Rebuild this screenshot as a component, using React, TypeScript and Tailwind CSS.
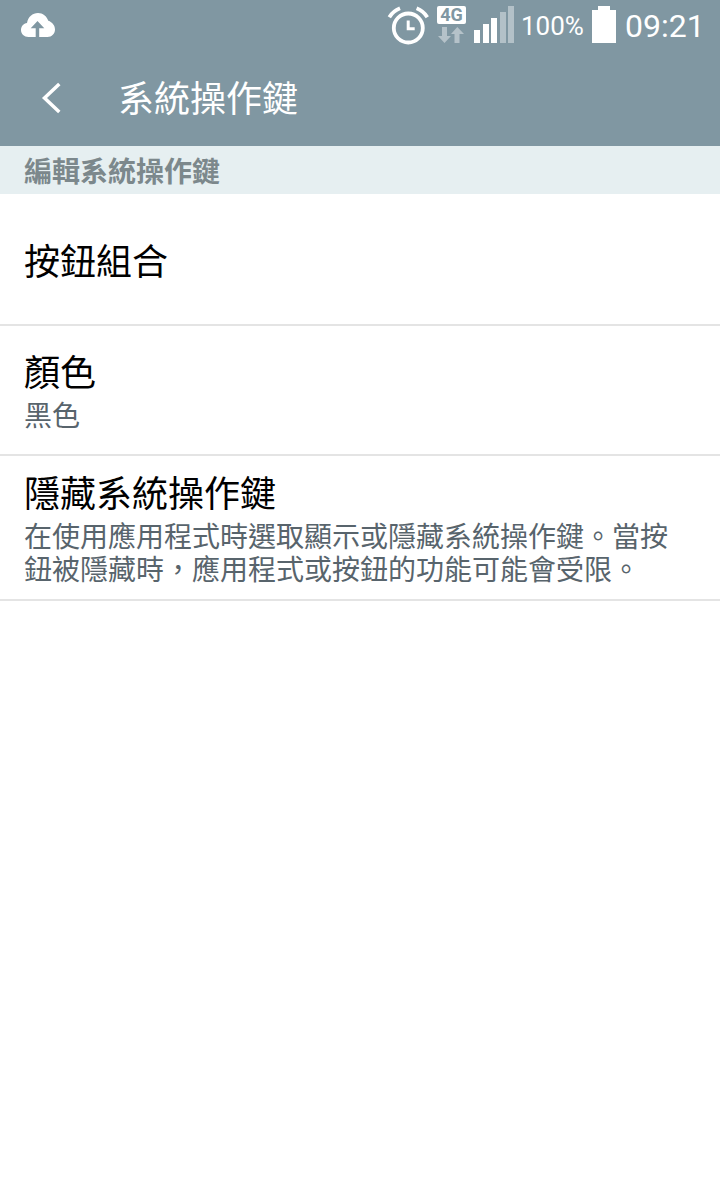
type SettingRowProps = {
  title: string;
  summary?: string;
  className: string;
};

function CloudUploadIcon() {
  return (
    <svg className="h-[50px] w-9" viewBox="20 0 36 50">
      <path
        fill="#fff"
        d="M28.500 37C24.200 37 21 33.900 21 30c0-3.600 2.600-6.500 6-7C28.200 16.800 32.500 13 38 13c4.800 0 8.800 3.200 10.300 7.800C52.200 22.200 55 25.500 55 29.500c0 4.300-3.300 7.500-7.500 7.500H39.200v-8.800h5.100L37.500 21l-6.800 7.200h5V37z"
      />
    </svg>
  );
}

function AlarmIcon() {
  return (
    <svg className="h-[50px] w-[42px]" viewBox="387 0 42 50" fill="none" stroke="#fff">
      <circle cx="408.300" cy="28" r="14.500" strokeWidth="3.800" />
      <path d="M408.200 20.500v8.200h6.500" strokeWidth="3" />
      <path d="M389.300 17.200A22 22 0 0 1 400 8.300M427.300 17.200A22 22 0 0 0 416.600 8.300" strokeWidth="3.800" />
    </svg>
  );
}

function NetworkIcon() {
  return (
    <div className="flex w-[29px] flex-col pt-[6px]">
      <div className="flex h-[18px] items-center justify-center rounded-[2px] bg-white text-[18px] leading-[18px] font-bold text-[#8097a2]">
        4G
      </div>
      <svg className="mt-[3px] h-4 w-[29px]" viewBox="0 0 29 16" fill="#b5c2c9">
        <path d="M5 0h5v9h4l-6.500 7L1 9h4zM17.500 16h5V7h4.500L20.300 0 14 7h3.500z" />
      </svg>
    </div>
  );
}

function SignalIcon() {
  return (
    <svg className="h-[50px] w-10" viewBox="474 0 40 50">
      <path fill="#fff" d="M474 30h6v13h-6zM483 24h6v19h-6zM491 18h6v25h-6z" />
      <path fill="#b3c1c8" d="M500 12h6v31h-6zM508 6h6v37h-6z" />
    </svg>
  );
}

function BatteryIcon() {
  return (
    <svg className="h-[50px] w-6" viewBox="0 0 24 50">
      <path fill="#fff" d="M6 6h12v4h6v33H0V10h6z" />
    </svg>
  );
}

function StatusBar() {
  return (
    <div className="flex h-[50px] items-start pr-4 pl-5 font-[Roboto,sans-serif] text-white">
      <CloudUploadIcon />
      <div className="ml-auto flex items-start">
        <AlarmIcon />
        <div className="ml-2">
          <NetworkIcon />
        </div>
        <div className="ml-2">
          <SignalIcon />
        </div>
        <span className="ml-[7px] w-[71px] text-[26px] leading-[53px] whitespace-nowrap">100%</span>
        <BatteryIcon />
        <span className="ml-[9px] w-[79px] text-[32px] leading-[52px] whitespace-nowrap">09:21</span>
      </div>
    </div>
  );
}

function TitleBar() {
  return (
    <div className="flex h-24 items-center text-white">
      <svg className="ml-10 h-8 w-6" viewBox="0 0 24 32" fill="none" stroke="#fff" strokeWidth="3.500">
        <path d="M19.300 2L4.500 16l14.800 14" />
      </svg>
      <h1 className="ml-[54px] pb-1 text-[36px] leading-[54px]">系統操作鍵</h1>
    </div>
  );
}

function SettingRow({ title, summary, className }: SettingRowProps) {
  return (
    <li className={`border-b-2 border-[#e4e4e4] pr-10 pl-6 ${className}`}>
      <div className="text-[36px] leading-[54px] text-black">{title}</div>
      {summary && <p className="pt-px text-[28px] leading-[33px] text-[#58646c]">{summary}</p>}
    </li>
  );
}

export default function App() {
  return (
    <div
      lang="zh-TW"
      className="min-h-[1196px] w-[720px] bg-white font-['Noto_Sans_CJK_TC',sans-serif]"
    >
      <header className="h-[146px] bg-[#8097a2]">
        <StatusBar />
        <TitleBar />
      </header>

      <h2 className="h-12 bg-[#e6eff1] px-6 text-[28px] leading-[48px] font-bold text-[#7c888c]">
        編輯系統操作鍵
      </h2>

      <ul>
        <SettingRow title="按鈕組合" className="h-[132px] pt-[38px]" />
        <SettingRow title="顏色" summary="黑色" className="h-[130px] pt-[17px]" />
        <SettingRow
          title="隱藏系統操作鍵"
          summary="在使用應用程式時選取顯示或隱藏系統操作鍵。當按鈕被隱藏時，應用程式或按鈕的功能可能會受限。"
          className="h-[145px] pt-2"
        />
      </ul>
    </div>
  );
}
